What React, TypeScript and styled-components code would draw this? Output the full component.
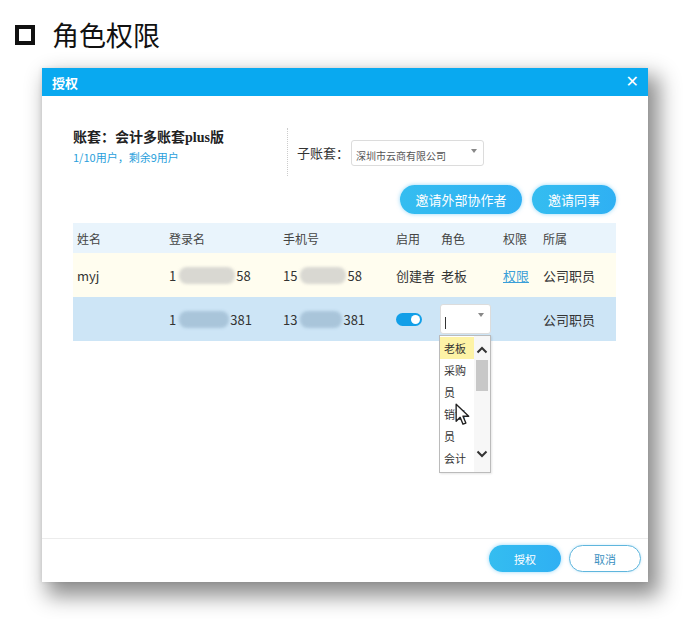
import React from "react";
import styled, { createGlobalStyle } from "styled-components";

const Global = createGlobalStyle`
  html, body { margin: 0; padding: 0; background: #fff; }
  body { font-family: "Noto Sans CJK SC", "Noto Sans", sans-serif; color: #333; }
  * { box-sizing: border-box; }
`;

const Page = styled.div`
  width: 700px;
  height: 619px;
  padding-top: 17px;
  overflow: hidden;
  position: relative;
`;

const TitleRow = styled.div`
  display: flex;
  align-items: center;
  height: 36px;
  padding-left: 15px;
  gap: 17px;
`;

const TitleBox = styled.span`
  width: 20px;
  height: 20px;
  border: 4px solid #111;
`;

const TitleText = styled.h1`
  margin: 0;
  font-size: 27px;
  font-weight: 400;
  color: #111;
  line-height: 36px;
`;

const Dialog = styled.div`
  margin: 15px 0 0 42px;
  width: 606px;
  height: 514px;
  background: #fff;
  display: flex;
  flex-direction: column;
  box-shadow: 8px 11px 20px 3px rgba(0, 0, 0, 0.45), -1px 0 4px rgba(0, 0, 0, 0.08);
  position: relative;
`;

const Header = styled.div`
  height: 28px;
  background: #09a9f0;
  display: flex;
  align-items: center;
  justify-content: space-between;
  padding: 0 9px 0 10px;
  color: #fff;
`;

const HeaderTitle = styled.span`
  font-size: 13px;
  font-weight: 700;
`;

const Close = styled.span`
  font-size: 16px;
  font-family: "DejaVu Sans", sans-serif;
  line-height: 1;
`;

const Body = styled.div`
  flex: 1;
  padding: 32px 32px 0 31px;
  position: relative;
`;

const TopSection = styled.div`
  display: flex;
  align-items: stretch;
  height: 48px;
`;

const Account = styled.div`
  width: 214px;
  display: flex;
  flex-direction: column;
  padding-top: 1px;
`;

const AccountTitle = styled.div`
  font-family: "Liberation Serif", "Noto Sans CJK SC", serif;
  font-weight: 700;
  font-size: 14px;
  color: #222;
  line-height: 18px;
`;

const AccountSub = styled.div`
  font-size: 11px;
  color: #2a9fdc;
  margin-top: 3px;
  line-height: 15px;
`;

const Divider = styled.div`
  border-left: 1px dotted #ccc;
  margin-right: 9px;
`;

const SubLabel = styled.span`
  font-size: 13px;
  color: #333;
  align-self: center;
`;

const Select = styled.div<{ $w: number; $h: number }>`
  width: ${(p) => p.$w}px;
  height: ${(p) => p.$h}px;
  border: 1px solid #dcdcdc;
  border-radius: 3px;
  background: #fff;
  display: flex;
  align-items: center;
  justify-content: space-between;
  padding: 0 6px 0 4px;
  font-size: 10px;
  color: #555;
  position: relative;
`;

const SelectText = styled.span`
  margin-top: 4px;
`;

const SubSelectWrap = styled.div`
  display: flex;
  align-items: flex-end;
  height: 38px;
  margin-left: 2px;
`;

const Caret = styled.span`
  width: 0;
  height: 0;
  border-left: 3px solid transparent;
  border-right: 3px solid transparent;
  border-top: 4px solid #888;
  align-self: flex-start;
  margin-top: 8px;
`;

const ButtonRow = styled.div`
  display: flex;
  justify-content: flex-end;
  gap: 10px;
  margin-top: 9px;
`;

const PillButton = styled.button<{ $w: number; $h: number; $outline?: boolean }>`
  width: ${(p) => p.$w}px;
  height: ${(p) => p.$h}px;
  border-radius: ${(p) => p.$h / 2}px;
  border: ${(p) => (p.$outline ? "1.5px solid #5fb6dd" : "none")};
  background: ${(p) => (p.$outline ? "#fff" : "linear-gradient(90deg, #34bdf0, #2fb0f3)")};
  color: ${(p) => (p.$outline ? "#3a8fc0" : "#fff")};
  font-family: "Noto Sans CJK SC", sans-serif;
  font-size: ${(p) => (p.$h > 28 ? 13 : 11)}px;
  box-shadow: ${(p) => (p.$outline ? "0 0 3px rgba(120,200,240,0.4)" : "0 0 4px rgba(80,190,245,0.6)")};
  padding: 0;
  cursor: pointer;
`;

const Table = styled.div`
  margin-top: 9px;
  width: 543px;
`;

const Row = styled.div<{ $bg: string; $h: number }>`
  display: grid;
  grid-template-columns: 92px 114px 113px 45px 62px 40px 1fr;
  height: ${(p) => p.$h}px;
  background: ${(p) => p.$bg};
  align-items: center;
  font-size: 13px;
  color: #333;
`;

const Cell = styled.div`
  padding-left: 4px;
  white-space: nowrap;
  display: flex;
  align-items: center;
  position: relative;
`;

const HeadCell = styled(Cell)`
  font-size: 12px;
  color: #444;
`;

const Blur = styled.span<{ $c: string; $w: number }>`
  display: inline-block;
  width: ${(p) => p.$w}px;
  height: 17px;
  margin: 0 1px 0 3px;
  border-radius: 8px;
  background: ${(p) => p.$c};
  filter: blur(1.5px);
`;

const Link = styled.a`
  color: #3a9fd8;
  text-decoration: underline;
`;

const Toggle = styled.span`
  width: 26px;
  height: 13px;
  border-radius: 7px;
  background: #129fe8;
  position: relative;
  &::after {
    content: "";
    position: absolute;
    right: 2px;
    top: 2px;
    width: 9px;
    height: 9px;
    border-radius: 50%;
    background: #fff;
  }
`;

const TextCursor = styled.span`
  width: 1px;
  height: 12px;
  background: #333;
  align-self: flex-end;
  margin-bottom: 4px;
`;

const RoleSelectWrap = styled.div`
  margin-left: -1px;
  position: relative;
`;

const Dropdown = styled.div`
  position: absolute;
  left: -1px;
  top: 31px;
  width: 52px;
  height: 138px;
  background: #fff;
  border: 1px solid #bbb;
  display: flex;
  z-index: 2;
  box-shadow: 1px 1px 2px rgba(0,0,0,0.1);
`;

const Options = styled.div`
  width: 34px;
  padding-top: 1px;
  display: flex;
  flex-direction: column;
`;

const Option = styled.div<{ $active?: boolean }>`
  font-size: 11px;
  line-height: 22px;
  padding-left: 4px;
  background: ${(p) => (p.$active ? "#fdf3a6" : "transparent")};
  color: #333;
`;

const ScrollBar = styled.div`
  width: 16px;
  display: flex;
  flex-direction: column;
  align-items: center;
  padding: 10px 0 14px;
  background: #f7f7f7;
`;

const Thumb = styled.div`
  width: 12px;
  height: 31px;
  background: #c8c8c8;
  margin-top: 6px;
`;

const Spacer = styled.div`
  flex: 1;
`;

const Footer = styled.div`
  border-top: 1px solid #ececec;
  height: 44px;
  display: flex;
  justify-content: flex-end;
  align-items: center;
  gap: 8px;
  padding: 0 7px 4px 0;
`;

const Pointer = styled.svg`
  position: absolute;
  left: 455px;
  top: 403px;
  z-index: 5;
`;

const Chevron = ({ up }: { up?: boolean }) => (
  <svg width="12" height="8" viewBox="0 0 12 8">
    <path d={up ? "M1.5 6.5 L6 2 L10.5 6.5" : "M1.5 1.5 L6 6 L10.5 1.5"} fill="none" stroke="#333" strokeWidth="2" />
  </svg>
);

export default function App() {
  return (
    <Page>
      <Global />
      <TitleRow>
        <TitleBox />
        <TitleText>角色权限</TitleText>
      </TitleRow>
      <Dialog>
        <Header>
          <HeaderTitle>授权</HeaderTitle>
          <Close>✕</Close>
        </Header>
        <Body>
          <TopSection>
            <Account>
              <AccountTitle>账套：会计多账套plus版</AccountTitle>
              <AccountSub>1/10用户，剩余9用户</AccountSub>
            </Account>
            <Divider />
            <SubLabel>子账套：</SubLabel>
            <SubSelectWrap>
              <Select $w={133} $h={26}>
                <SelectText>深圳市云商有限公司</SelectText>
                <Caret />
              </Select>
            </SubSelectWrap>
          </TopSection>
          <ButtonRow>
            <PillButton $w={122} $h={29}>邀请外部协作者</PillButton>
            <PillButton $w={84} $h={29}>邀请同事</PillButton>
          </ButtonRow>
          <Table>
            <Row $bg="#e9f4fc" $h={30}>
              <HeadCell>姓名</HeadCell>
              <HeadCell>登录名</HeadCell>
              <HeadCell>手机号</HeadCell>
              <HeadCell>启用</HeadCell>
              <HeadCell>角色</HeadCell>
              <HeadCell>权限</HeadCell>
              <HeadCell>所属</HeadCell>
            </Row>
            <Row $bg="#fffdef" $h={44}>
              <Cell>myj</Cell>
              <Cell>1<Blur $c="#d9d8d2" $w={56} />58</Cell>
              <Cell>15<Blur $c="#d9d8d2" $w={46} />58</Cell>
              <Cell>创建者</Cell>
              <Cell>老板</Cell>
              <Cell><Link>权限</Link></Cell>
              <Cell>公司职员</Cell>
            </Row>
            <Row $bg="#cde5f6" $h={44}>
              <Cell />
              <Cell>1<Blur $c="#a9c5da" $w={50} />381</Cell>
              <Cell>13<Blur $c="#a9c5da" $w={42} />381</Cell>
              <Cell><Toggle /></Cell>
              <Cell>
                <RoleSelectWrap>
                  <Select $w={51} $h={30}>
                    <TextCursor />
                    <Caret />
                  </Select>
                  <Dropdown>
                    <Options>
                      <Option $active>老板</Option>
                      <Option>采购<br />员</Option>
                      <Option>销售<br />员</Option>
                      <Option>会计</Option>
                    </Options>
                    <ScrollBar>
                      <Chevron up />
                      <Thumb />
                      <Spacer />
                      <Chevron />
                    </ScrollBar>
                  </Dropdown>
                </RoleSelectWrap>
              </Cell>
              <Cell />
              <Cell>公司职员</Cell>
            </Row>
          </Table>
        </Body>
        <Footer>
          <PillButton $w={72} $h={27}>授权</PillButton>
          <PillButton $w={72} $h={27} $outline>取消</PillButton>
        </Footer>
      </Dialog>
      <Pointer width="16" height="23" viewBox="0 0 14 20">
        <path d="M1 1 L1 16 L4.5 12.5 L7 18.5 L9.5 17.5 L7 11.5 L12 11.5 Z" fill="#fff" stroke="#222" strokeWidth="1.2" strokeLinejoin="round" />
      </Pointer>
    </Page>
  );
}
